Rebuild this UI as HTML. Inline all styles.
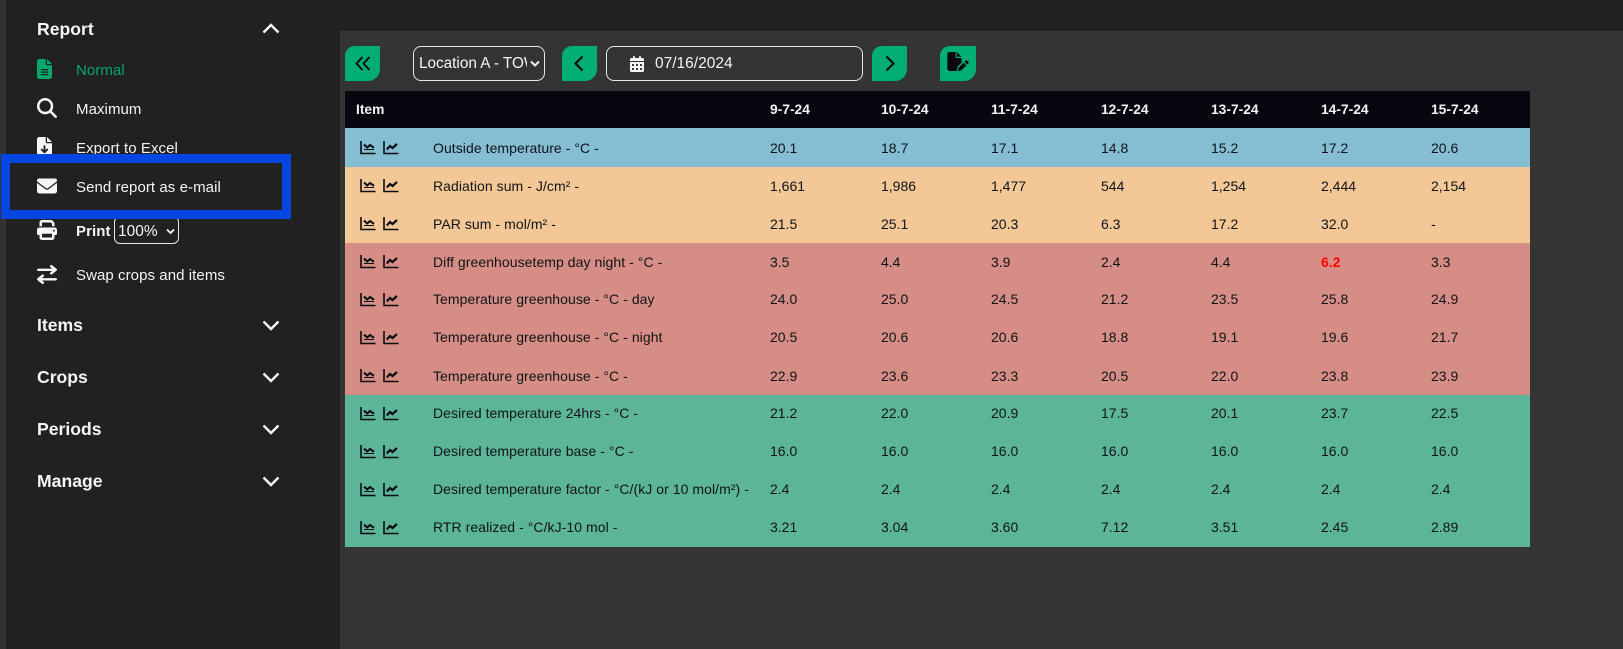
<!DOCTYPE html>
<html lang="en">
<head>
<meta charset="utf-8">
<title>Report</title>
<style>
html,body{margin:0;padding:0;background:#212121}
body{position:relative;width:1623px;height:649px;overflow:hidden;font-family:"Liberation Sans",Arial,sans-serif;color:#fff}
div,svg,span{position:absolute;box-sizing:border-box}
.t{white-space:nowrap;line-height:20px;height:20px}
.h{left:37px;font-size:17.6px;font-weight:700;color:#f6f6f6}
.m{left:76px;font-size:15px;color:#f4f4f4;letter-spacing:.07px}
.ic{fill:#f6f6f6}
.ch{left:262px;width:18px;height:11px;fill:none;stroke:#f6f6f6;stroke-width:2.4}
.btn{top:46px;width:35px;height:35px;background:#00ae74;border-radius:10px 0 12px 0}
.btn svg{fill:none;stroke:#070710;stroke-width:2.1}
.box{top:46px;height:35px;border:1px solid #e6e6e6;border-radius:8px}
.row{left:345px;width:1185px;height:38px;font-size:14px;color:#101418}
.row .t{top:8px}
.row.o9 .t{top:9px}
.row.o10 .t{top:10px}
.row .a{left:88px;letter-spacing:.06px}
.c1{left:425px}.c2{left:536px}.c3{left:646px}.c4{left:756px}.c5{left:866px}.c6{left:976px}.c7{left:1086px}
.g1{left:15px;top:11px}.g2{left:38px;top:11px}
.row.o10 .g1,.row.o10 .g2{top:12px}
.g1,.g2{width:16px;height:15px;fill:none;stroke:#0b0d12;stroke-width:1.6}
.hd{font-size:13.8px;font-weight:700;color:#f2f2f2;top:100px}
</style>
</head>
<body>
<svg width="0" height="0" style="position:absolute">
<symbol id="g1" viewBox="0 0 16 15"><path d="M1 1v12.500h14.500"/><path d="M4 4.500l3.200 3 2.800-2.500 4 2.800" stroke-width="2"/><path d="M4 9.500h10" stroke-width="1"/></symbol>
<symbol id="g2" viewBox="0 0 16 15"><path d="M1 1v12.500h14.500"/><path d="M3.800 9.500l3.200-3.500 2.500 2 4.500-4" stroke-width="2.200"/></symbol>
</svg>

<div style="left:0;top:0;width:6px;height:649px;background:#333"></div>
<div style="left:340px;top:31px;width:1283px;height:618px;background:#343434"></div>

<!-- sidebar -->
<div class="t h" style="top:19px">Report</div>
<svg class="ch" style="top:23px" viewBox="0 0 18 11"><path d="M1.500 9.500L9 2l7.500 7.500"/></svg>

<svg style="left:37px;top:59px;width:15px;height:20px;fill:#00a86b" viewBox="0 0 384 512"><path d="M64 0C28.700 0 0 28.700 0 64V448c0 35.300 28.700 64 64 64H320c35.300 0 64-28.700 64-64V160H256c-17.700 0-32-14.300-32-32V0H64zM256 0V128H384L256 0zM112 256H272c8.800 0 16 7.200 16 16s-7.200 16-16 16H112c-8.800 0-16-7.200-16-16s7.200-16 16-16zm0 64H272c8.800 0 16 7.200 16 16s-7.200 16-16 16H112c-8.800 0-16-7.200-16-16s7.200-16 16-16zm0 64H272c8.800 0 16 7.200 16 16s-7.200 16-16 16H112c-8.800 0-16-7.200-16-16s7.200-16 16-16z"/></svg>
<div class="t m" style="top:61px;color:#00a86b">Normal</div>

<svg class="ic" style="left:37px;top:98px;width:20px;height:20px" viewBox="0 0 512 512"><path d="M416 208c0 45.900-14.900 88.300-40 122.700L502.600 457.400c12.500 12.500 12.500 32.800 0 45.300s-32.800 12.500-45.300 0L330.700 376c-34.400 25.200-76.800 40-122.700 40C93.100 416 0 322.900 0 208S93.100 0 208 0S416 93.100 416 208zM208 352a144 144 0 1 0 0-288 144 144 0 1 0 0 288z"/></svg>
<div class="t m" style="top:100px">Maximum</div>

<svg class="ic" style="left:37px;top:137px;width:15px;height:20px" viewBox="0 0 384 512"><path d="M64 0C28.700 0 0 28.700 0 64V448c0 35.300 28.700 64 64 64H320c35.300 0 64-28.700 64-64V160H256c-17.700 0-32-14.300-32-32V0H64zM256 0V128H384L256 0zM216 232V334.100l31-31c9.400-9.400 24.600-9.400 33.900 0s9.400 24.600 0 33.900l-72 72c-9.400 9.400-24.600 9.400-33.900 0l-72-72c-9.400-9.400-9.400-24.600 0-33.900s24.600-9.400 33.900 0l31 31V232c0-13.300 10.700-24 24-24s24 10.700 24 24z"/></svg>
<div class="t m" style="top:139px">Export to Excel</div>

<svg class="ic" style="left:37px;top:176px;width:20px;height:20px" viewBox="0 0 512 512"><path d="M48 64C21.500 64 0 85.500 0 112c0 15.100 7.100 29.300 19.200 38.400L236.800 313.600c11.400 8.500 27 8.500 38.400 0L492.800 150.400c12.100-9.100 19.200-23.300 19.200-38.400c0-26.500-21.500-48-48-48H48zM0 176V384c0 35.300 28.700 64 64 64H448c35.300 0 64-28.700 64-64V176L294.400 339.200c-22.800 17.100-54 17.100-76.800 0L0 176z"/></svg>
<div class="t m" style="top:178px">Send report as e-mail</div>

<svg class="ic" style="left:37px;top:220px;width:20px;height:20px" viewBox="0 0 512 512"><path d="M128 0C92.700 0 64 28.700 64 64v96h64V64H354.700L384 93.300V160h64V93.300c0-17-6.700-33.300-18.700-45.300L400 18.700C388 6.700 371.700 0 354.700 0H128zM384 352v32 64H128V384 368 352H384zm64 32h32c17.700 0 32-14.300 32-32V256c0-35.300-28.700-64-64-64H64c-35.300 0-64 28.700-64 64v96c0 17.700 14.300 32 32 32H64v64c0 35.300 28.700 64 64 64H384c35.300 0 64-28.700 64-64V384zM432 248a24 24 0 1 1 0 48 24 24 0 1 1 0-48z"/></svg>
<div class="t m" style="top:222px;font-weight:700">Print</div>
<div style="left:114px;top:216px;width:65px;height:28px;border:1px solid #e6e6e6;border-radius:6px"></div>
<div class="t" style="left:118px;top:222px;font-size:15.500px;color:#f4f4f4">100%</div>
<svg style="left:166px;top:228px;width:9px;height:7px;fill:none;stroke:#f4f4f4;stroke-width:1.800" viewBox="0 0 9 7"><path d="M1 1.500l3.500 3.500L8 1.500"/></svg>

<svg class="ic" style="left:37px;top:265px;width:20px;height:19px" viewBox="0 0 448 512" preserveAspectRatio="none"><path d="M438.600 150.600c12.500-12.500 12.500-32.800 0-45.300l-96-96c-12.500-12.500-32.800-12.500-45.300 0s-12.500 32.800 0 45.300L338.700 96 32 96C14.300 96 0 110.300 0 128s14.300 32 32 32l306.700 0-41.400 41.400c-12.500 12.500-12.500 32.800 0 45.300s32.800 12.500 45.300 0l96-96zm-333.300 352c12.500 12.500 32.800 12.500 45.300 0s12.500-32.800 0-45.300L109.300 416 416 416c17.700 0 32-14.300 32-32s-14.300-32-32-32l-306.700 0 41.400-41.400c12.500-12.500 12.500-32.800 0-45.300s-32.800-12.500-45.300 0l-96 96c-12.500 12.500-12.500 32.800 0 45.300l96 96z"/></svg>
<div class="t m" style="top:266px">Swap crops and items</div>

<div class="t h" style="top:315px">Items</div>
<svg class="ch" style="top:320px" viewBox="0 0 18 11"><path d="M1.500 1.500L9 9l7.500-7.500"/></svg>
<div class="t h" style="top:367px">Crops</div>
<svg class="ch" style="top:372px" viewBox="0 0 18 11"><path d="M1.500 1.500L9 9l7.500-7.500"/></svg>
<div class="t h" style="top:419px">Periods</div>
<svg class="ch" style="top:424px" viewBox="0 0 18 11"><path d="M1.500 1.500L9 9l7.500-7.500"/></svg>
<div class="t h" style="top:471px">Manage</div>
<svg class="ch" style="top:476px" viewBox="0 0 18 11"><path d="M1.500 1.500L9 9l7.500-7.500"/></svg>

<!-- highlight box -->
<div style="left:1px;top:154px;width:290px;height:65px;border:9px solid #0047e1"></div>

<!-- toolbar -->
<div class="btn" style="left:345px"><svg style="left:10px;top:10px;width:16px;height:15px" viewBox="0 0 16 15"><path d="M7.500 1L1.500 7.500l6 6.500M14.500 1L8.500 7.500l6 6.500" stroke-width="1.800"/></svg></div>
<div class="box" style="left:413px;width:132px"></div>
<div style="left:419px;top:46px;width:108px;height:35px;overflow:hidden"><div class="t" style="left:0;top:8px;font-size:15.300px;color:#f4f4f4">Location A - TOWER</div></div>
<svg style="left:530px;top:60px;width:10px;height:8px;fill:none;stroke:#f4f4f4;stroke-width:2" viewBox="0 0 10 8"><path d="M1 1.500l4 4 4-4"/></svg>
<div class="btn" style="left:562px"><svg style="left:11px;top:9px;width:12px;height:17px" viewBox="0 0 12 17"><path d="M9.500 1.500L2.500 8.500l7 7"/></svg></div>
<div class="box" style="left:606px;width:257px"></div>
<svg class="ic" style="left:630px;top:56px;width:14px;height:16px" viewBox="0 0 448 512"><path d="M128 0c17.700 0 32 14.300 32 32V64H288V32c0-17.700 14.300-32 32-32s32 14.300 32 32V64h48c26.500 0 48 21.500 48 48v48H0V112C0 85.500 21.500 64 48 64H96V32c0-17.700 14.300-32 32-32zM0 192H448V464c0 26.500-21.500 48-48 48H48c-26.500 0-48-21.500-48-48V192zm64 80v32c0 8.800 7.200 16 16 16h32c8.800 0 16-7.200 16-16V272c0-8.800-7.200-16-16-16H80c-8.800 0-16 7.200-16 16zm128 0v32c0 8.800 7.200 16 16 16h32c8.800 0 16-7.200 16-16V272c0-8.800-7.200-16-16-16H208c-8.800 0-16 7.200-16 16zm144-16c-8.800 0-16 7.200-16 16v32c0 8.800 7.200 16 16 16h32c8.800 0 16-7.200 16-16V272c0-8.800-7.200-16-16-16H336zM64 400v32c0 8.800 7.200 16 16 16h32c8.800 0 16-7.200 16-16V400c0-8.800-7.200-16-16-16H80c-8.800 0-16 7.200-16 16zm144-16c-8.800 0-16 7.200-16 16v32c0 8.800 7.200 16 16 16h32c8.800 0 16-7.200 16-16V400c0-8.800-7.200-16-16-16H208zm112 16v32c0 8.800 7.200 16 16 16h32c8.800 0 16-7.200 16-16V400c0-8.800-7.200-16-16-16H336c-8.800 0-16 7.200-16 16z"/></svg>
<div class="t" style="left:655px;top:54px;font-size:15.500px;color:#f4f4f4">07/16/2024</div>
<div class="btn" style="left:872px"><svg style="left:12px;top:9px;width:12px;height:17px" viewBox="0 0 12 17"><path d="M2.500 1.500l7 7-7 7"/></svg></div>
<div class="btn" style="left:940px;width:36px"><svg style="left:7px;top:6px;width:22px;height:19px;fill:#070710;stroke:none" viewBox="0 0 576 512"><path d="M0 64C0 28.700 28.700 0 64 0H224V128c0 17.700 14.300 32 32 32H384V285.700l-86.800 86.800c-10.300 10.300-17.500 23.100-21 37.200l-18.700 74.900c-2.300 9.200-1.800 18.800 1.300 27.500H64c-35.300 0-64-28.700-64-64V64zm384 64H256V0L384 128zM549.800 235.700l14.400 14.400c15.600 15.600 15.600 40.900 0 56.600l-29.400 29.400-71-71 29.400-29.400c15.600-15.600 40.900-15.600 56.600 0zM311.900 417L441.100 287.800l71 71L382.900 487.900c-4.100 4.100-9.200 7-14.900 8.400l-60.100 15c-5.500 1.400-11.200-.2-15.200-4.200s-5.600-9.700-4.200-15.200l15-60.100c1.400-5.600 4.300-10.800 8.400-14.900z"/></svg></div>

<!-- table header -->
<div style="left:345px;top:91px;width:1185px;height:37px;background:#070710"></div>
<div class="t hd" style="left:356px">Item</div>
<div class="t hd" style="left:770px">9-7-24</div>
<div class="t hd" style="left:881px">10-7-24</div>
<div class="t hd" style="left:991px">11-7-24</div>
<div class="t hd" style="left:1101px">12-7-24</div>
<div class="t hd" style="left:1211px">13-7-24</div>
<div class="t hd" style="left:1321px">14-7-24</div>
<div class="t hd" style="left:1431px">15-7-24</div>

<!-- rows -->
<div class="row o10" style="top:128px;height:39px;background:#85bdd3"><svg class="g1"><use href="#g1"/></svg><svg class="g2"><use href="#g2"/></svg><div class="t a">Outside temperature - °C -</div><div class="t c1">20.1</div><div class="t c2">18.7</div><div class="t c3">17.1</div><div class="t c4">14.8</div><div class="t c5">15.2</div><div class="t c6">17.2</div><div class="t c7">20.6</div></div>

<div class="row o9" style="top:167px;background:#f3c796"><svg class="g1"><use href="#g1"/></svg><svg class="g2"><use href="#g2"/></svg><div class="t a">Radiation sum - J/cm² -</div><div class="t c1">1,661</div><div class="t c2">1,986</div><div class="t c3">1,477</div><div class="t c4">544</div><div class="t c5">1,254</div><div class="t c6">2,444</div><div class="t c7">2,154</div></div>

<div class="row o9" style="top:205px;background:#f3c796"><svg class="g1"><use href="#g1"/></svg><svg class="g2"><use href="#g2"/></svg><div class="t a">PAR sum - mol/m² -</div><div class="t c1">21.5</div><div class="t c2">25.1</div><div class="t c3">20.3</div><div class="t c4">6.3</div><div class="t c5">17.2</div><div class="t c6">32.0</div><div class="t c7">-</div></div>

<div class="row o9" style="top:243px;background:#d68d85"><svg class="g1"><use href="#g1"/></svg><svg class="g2"><use href="#g2"/></svg><div class="t a">Diff greenhousetemp day night - °C -</div><div class="t c1">3.5</div><div class="t c2">4.4</div><div class="t c3">3.9</div><div class="t c4">2.4</div><div class="t c5">4.4</div><div class="t c6" style="color:#f00;font-weight:700">6.2</div><div class="t c7">3.3</div></div>

<div class="row" style="top:281px;background:#d68d85"><svg class="g1"><use href="#g1"/></svg><svg class="g2"><use href="#g2"/></svg><div class="t a">Temperature greenhouse - °C - day</div><div class="t c1">24.0</div><div class="t c2">25.0</div><div class="t c3">24.5</div><div class="t c4">21.2</div><div class="t c5">23.5</div><div class="t c6">25.8</div><div class="t c7">24.9</div></div>

<div class="row" style="top:319px;background:#d68d85"><svg class="g1"><use href="#g1"/></svg><svg class="g2"><use href="#g2"/></svg><div class="t a">Temperature greenhouse - °C - night</div><div class="t c1">20.5</div><div class="t c2">20.6</div><div class="t c3">20.6</div><div class="t c4">18.8</div><div class="t c5">19.1</div><div class="t c6">19.6</div><div class="t c7">21.7</div></div>

<div class="row o9" style="top:357px;background:#d68d85"><svg class="g1"><use href="#g1"/></svg><svg class="g2"><use href="#g2"/></svg><div class="t a">Temperature greenhouse - °C -</div><div class="t c1">22.9</div><div class="t c2">23.6</div><div class="t c3">23.3</div><div class="t c4">20.5</div><div class="t c5">22.0</div><div class="t c6">23.8</div><div class="t c7">23.9</div></div>

<div class="row" style="top:395px;background:#5cb598"><svg class="g1"><use href="#g1"/></svg><svg class="g2"><use href="#g2"/></svg><div class="t a">Desired temperature 24hrs - °C -</div><div class="t c1">21.2</div><div class="t c2">22.0</div><div class="t c3">20.9</div><div class="t c4">17.5</div><div class="t c5">20.1</div><div class="t c6">23.7</div><div class="t c7">22.5</div></div>

<div class="row" style="top:433px;background:#5cb598"><svg class="g1"><use href="#g1"/></svg><svg class="g2"><use href="#g2"/></svg><div class="t a">Desired temperature base - °C -</div><div class="t c1">16.0</div><div class="t c2">16.0</div><div class="t c3">16.0</div><div class="t c4">16.0</div><div class="t c5">16.0</div><div class="t c6">16.0</div><div class="t c7">16.0</div></div>

<div class="row" style="top:471px;background:#5cb598"><svg class="g1"><use href="#g1"/></svg><svg class="g2"><use href="#g2"/></svg><div class="t a">Desired temperature factor - °C/(kJ or 10 mol/m²) -</div><div class="t c1">2.4</div><div class="t c2">2.4</div><div class="t c3">2.4</div><div class="t c4">2.4</div><div class="t c5">2.4</div><div class="t c6">2.4</div><div class="t c7">2.4</div></div>

<div class="row" style="top:509px;background:#5cb598"><svg class="g1"><use href="#g1"/></svg><svg class="g2"><use href="#g2"/></svg><div class="t a">RTR realized - °C/kJ-10 mol -</div><div class="t c1">3.21</div><div class="t c2">3.04</div><div class="t c3">3.60</div><div class="t c4">7.12</div><div class="t c5">3.51</div><div class="t c6">2.45</div><div class="t c7">2.89</div></div>
</body>
</html>
